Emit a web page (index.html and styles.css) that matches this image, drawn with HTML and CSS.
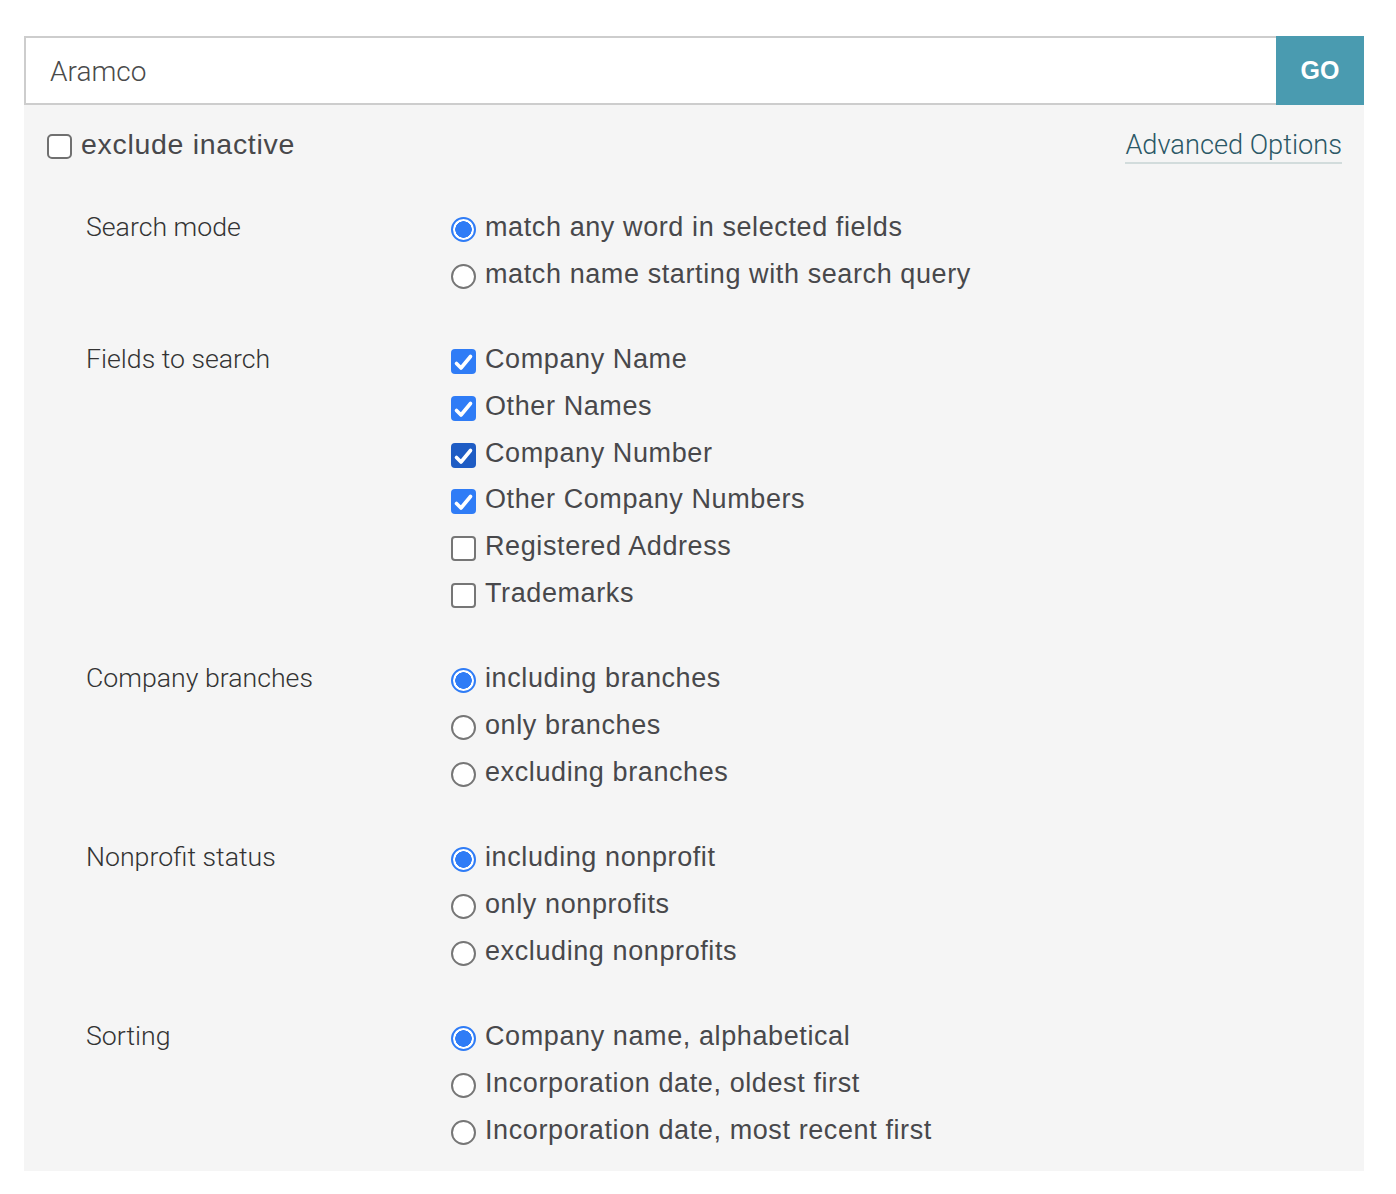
FILE: index.html
```html
<!DOCTYPE html>
<html>
<head>
<meta charset="utf-8">
<link rel="stylesheet" href="styles.css">
</head>
<body>
<div class="wrap">
  <div class="search">
    <div class="search-input">Aramco</div>
    <div class="go">GO</div>
  </div>
  <div class="panel">
    <div class="top-row">
      <label class="exclude"><span class="box"></span>exclude inactive</label>
      <a class="adv">Advanced Options</a>
    </div>

    <div class="section">
      <div class="sec-label">Search mode</div>
      <div class="opts">
        <div class="opt"><span class="radio on"></span>match any word in selected fields</div>
        <div class="opt"><span class="radio"></span>match name starting with search query</div>
      </div>
    </div>

    <div class="section">
      <div class="sec-label">Fields to search</div>
      <div class="opts">
        <div class="opt"><span class="box on"><svg viewBox="0 0 25 25"><path d="M5.5 14.5L10 19L19.5 7.5" /></svg></span>Company Name</div>
        <div class="opt"><span class="box on"><svg viewBox="0 0 25 25"><path d="M5.5 14.5L10 19L19.5 7.5" /></svg></span>Other Names</div>
        <div class="opt"><span class="box on focus"><svg viewBox="0 0 25 25"><path d="M5.5 14.5L10 19L19.5 7.5" /></svg></span>Company Number</div>
        <div class="opt"><span class="box on"><svg viewBox="0 0 25 25"><path d="M5.5 14.5L10 19L19.5 7.5" /></svg></span>Other Company Numbers</div>
        <div class="opt"><span class="box"></span>Registered Address</div>
        <div class="opt"><span class="box"></span>Trademarks</div>
      </div>
    </div>

    <div class="section">
      <div class="sec-label">Company branches</div>
      <div class="opts">
        <div class="opt"><span class="radio on"></span>including branches</div>
        <div class="opt"><span class="radio"></span>only branches</div>
        <div class="opt"><span class="radio"></span>excluding branches</div>
      </div>
    </div>

    <div class="section">
      <div class="sec-label">Nonprofit status</div>
      <div class="opts">
        <div class="opt"><span class="radio on"></span>including nonprofit</div>
        <div class="opt"><span class="radio"></span>only nonprofits</div>
        <div class="opt"><span class="radio"></span>excluding nonprofits</div>
      </div>
    </div>

    <div class="section">
      <div class="sec-label">Sorting</div>
      <div class="opts">
        <div class="opt"><span class="radio on"></span>Company name, alphabetical</div>
        <div class="opt"><span class="radio"></span>Incorporation date, oldest first</div>
        <div class="opt"><span class="radio"></span>Incorporation date, most recent first</div>
      </div>
    </div>
  </div>
</div>
</body>
</html>
```

FILE: styles.css
```css
html, body {
  margin: 0;
  padding: 0;
  background: #ffffff;
}

body {
  font-family: "Liberation Sans", Arial, sans-serif;
  color: #4a4a4d;
}

.wrap {
  padding: 36px 32px 0 24px;
}

.search {
  display: flex;
  height: 69px;
}

.search-input {
  flex: 1;
  box-sizing: border-box;
  border: 2px solid #cdcdcd;
  border-right: none;
  background: #fff;
  padding-left: 24px;
  font-family: Roboto, "Liberation Sans", sans-serif;
  font-weight: 300;
  font-size: 28px;
  line-height: 67px;
  color: #4a4a4a;
}

.go {
  width: 88px;
  background: #4a9bb0;
  color: #fff;
  font-weight: bold;
  font-size: 25px;
  display: flex;
  align-items: center;
  justify-content: center;
}

.panel {
  background: #f5f5f5;
  padding: 0 22px 18px 62px;
}

.top-row {
  display: flex;
  justify-content: space-between;
  align-items: center;
  padding-top: 16px;
  height: 46px;
  margin-left: -39px;
  margin-bottom: 37px;
}

.exclude {
  display: flex;
  align-items: center;
  font-size: 28.5px;
  letter-spacing: 0.7px;
  color: #48484b;
}

.exclude .box {
  margin-right: 9px;
  border-radius: 5px;
  border-color: #707070;
}

.adv {
  font-family: Roboto, "Liberation Sans", sans-serif;
  font-weight: 300;
  font-size: 27.2px;
  color: #2b5866;
  border-bottom: 2px solid #d2dcdc;
  line-height: 34px;
  margin-top: 4px;
}

.section {
  display: flex;
  margin-bottom: 39px;
}

.section:last-child {
  margin-bottom: 0;
}

.sec-label {
  width: 365px;
  font-family: Roboto, "Liberation Sans", sans-serif;
  font-weight: 300;
  font-size: 26.7px;
  line-height: 46.67px;
  color: #333;
}

.opts {
  display: flex;
  flex-direction: column;
}

.opt {
  display: flex;
  align-items: center;
  font-size: 27px;
  letter-spacing: 0.6px;
  line-height: 46.67px;
  color: #48484b;
}

.radio {
  box-sizing: border-box;
  width: 25px;
  height: 25px;
  border-radius: 50%;
  border: 2px solid #767676;
  background: #fff;
  margin-right: 9px;
  margin-top: 4px;
  flex: none;
}

.radio.on {
  border: 2.5px solid #2f7cf6;
  background: radial-gradient(circle, #2f7cf6 0 8px, #fff 8.5px);
}

.box {
  box-sizing: border-box;
  width: 25px;
  height: 25px;
  border-radius: 4px;
  border: 2px solid #767676;
  background: #fff;
  margin-right: 9px;
  margin-top: 4px;
  flex: none;
  display: flex;
  align-items: center;
  justify-content: center;
}

.box.on {
  border: none;
  background: #2f7cf6;
}

.box.focus {
  background: #1e5cc4;
}

.box svg {
  width: 25px;
  height: 25px;
  fill: none;
  stroke: #fff;
  stroke-width: 3.6;
  stroke-linecap: round;
  stroke-linejoin: round;
}
```
